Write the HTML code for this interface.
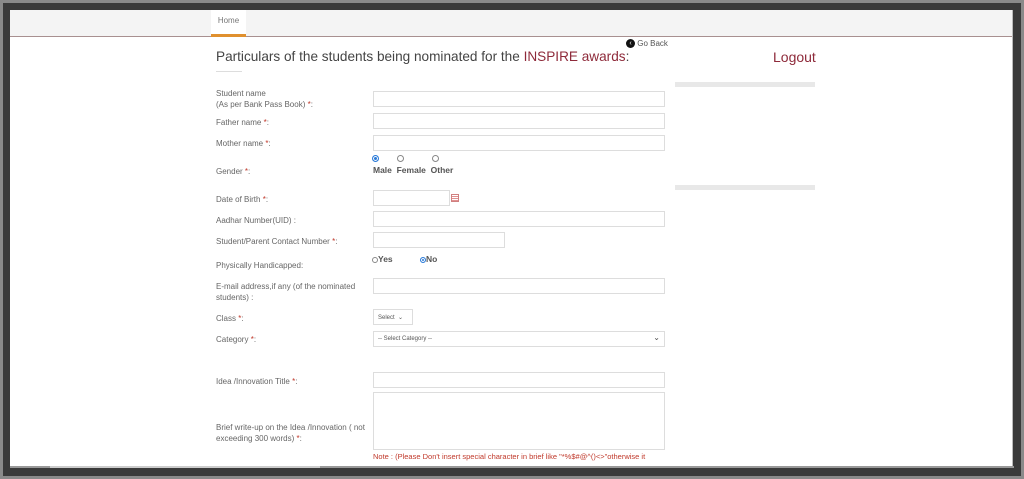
<!DOCTYPE html>
<html><head><meta charset="utf-8"><style>
*{margin:0;padding:0;box-sizing:border-box}
body{width:1024px;height:479px;background:#4a4a4a;position:relative;overflow:hidden;font-family:"Liberation Sans",sans-serif}
.frame{position:absolute;left:0;top:0;width:1024px;height:479px;border:3px solid #8a8a8a;background:#3a3a3a}
.page{position:absolute;left:10px;top:10px;width:1003px;height:457px;background:#fff;border-right:1px solid #bbb;overflow:hidden}
.nav{position:absolute;left:0;top:0;width:1003px;height:27px;background:#f4f4f4;border-bottom:1px solid #a89090}
.home{position:absolute;left:201px;top:0;width:35px;height:27px;background:#fff;border-bottom:3px solid #e0902e;font-size:8px;color:#777;text-align:center;line-height:22px}
.abs{position:absolute}
.t{font-size:13.6px;color:#444;left:206px;top:39px}
.t span{color:#8e2a3a}
.lbl{position:absolute;left:206px;font-size:8px;color:#666;line-height:11px}
.lbl b{color:#c0392b;font-weight:normal}
.in{position:absolute;border:1px solid #ddd;background:#fff;height:16px}
.bar{position:absolute;left:665px;width:140px;height:5px;background:#e8e8e8}
.rad{font-size:8.5px;font-weight:bold;color:#555}
.r{display:block;width:7px;height:7px;border:1px solid #888;border-radius:50%}
.r.on{background:#2a7ad8;border-color:#2a7ad8;box-shadow:inset 0 0 0 1px #fff}
.ri{display:inline-block;width:6px;height:6px;border:1px solid #888;border-radius:50%;vertical-align:-1px}
.ri.on{background:#2a7ad8;border-color:#2a7ad8;box-shadow:inset 0 0 0 1px #fff}
</style></head><body>
<div class="frame"></div>
<div class="page">
<div class="nav"><div class="home">Home</div></div>
<div class="abs t">Particulars of the students being nominated for the <span>INSPIRE awards</span>:</div>
<div class="abs" style="left:206px;top:61px;width:26px;height:1px;background:#ddd"></div>
<div class="abs" style="left:616px;top:29px;font-size:8px;color:#555"><span style="display:inline-block;width:9px;height:9px;border-radius:50%;background:#111;color:#fff;font-size:7px;line-height:9px;text-align:center;vertical-align:middle">‹</span> Go Back</div>
<div class="abs" style="left:763px;top:39px;font-size:14px;color:#8e2a3a">Logout</div>
<div class="bar" style="top:72px"></div>
<div class="bar" style="top:175px"></div>

<div class="lbl" style="top:78px">Student name<br>(As per Bank Pass Book) <b>*</b>:</div>
<div class="in" style="left:363px;top:81px;width:292px"></div>
<div class="lbl" style="top:107px">Father name <b>*</b>:</div>
<div class="in" style="left:363px;top:103px;width:292px"></div>
<div class="lbl" style="top:128px">Mother name <b>*</b>:</div>
<div class="in" style="left:363px;top:125px;width:292px"></div>
<div class="lbl" style="top:156px">Gender <b>*</b>:</div>
<div class="abs" style="left:362px;top:145px"><span class="r on"></span></div>
<div class="abs" style="left:387px;top:145px"><span class="r"></span></div>
<div class="abs" style="left:422px;top:145px"><span class="r"></span></div>
<div class="abs rad" style="left:363px;top:155px">Male&nbsp; Female&nbsp; Other</div>
<div class="lbl" style="top:184px">Date of Birth <b>*</b>:</div>
<div class="in" style="left:363px;top:180px;width:77px"></div>
<div class="abs" style="left:441px;top:184px;width:8px;height:8px;border:1px solid #d08080;background:repeating-linear-gradient(#fff 0 1px,#e09090 1px 2px)"></div>
<div class="lbl" style="top:205px">Aadhar Number(UID) :</div>
<div class="in" style="left:363px;top:201px;width:292px"></div>
<div class="lbl" style="top:226px">Student/Parent Contact Number <b>*</b>:</div>
<div class="in" style="left:363px;top:222px;width:132px"></div>
<div class="lbl" style="top:250px">Physically Handicapped:</div>
<div class="abs rad" style="left:362px;top:244px"><span class="ri"></span>Yes</div>
<div class="abs rad" style="left:410px;top:244px"><span class="ri on"></span>No</div>
<div class="lbl" style="top:271px">E-mail address,if any (of the nominated<br>students) :</div>
<div class="in" style="left:363px;top:268px;width:292px"></div>
<div class="lbl" style="top:303px">Class <b>*</b>:</div>
<div class="in" style="left:363px;top:299px;width:40px;font-size:6px;color:#555;padding:4px 0 0 4px">Select &nbsp;⌄</div>
<div class="lbl" style="top:324px">Category <b>*</b>:</div>
<div class="in" style="left:363px;top:321px;width:292px;font-size:6px;color:#555;padding:4px 0 0 4px">-- Select Category --<span style="position:absolute;right:4px;top:1px;font-size:8px">⌄</span></div>
<div class="lbl" style="top:366px">Idea /Innovation Title <b>*</b>:</div>
<div class="in" style="left:363px;top:362px;width:292px"></div>
<div class="lbl" style="top:412px">Brief write-up on the Idea /Innovation ( not<br>exceeding 300 words) <b>*</b>:</div>
<div class="in" style="left:363px;top:382px;width:292px;height:58px"></div>
<div class="abs" style="left:363px;top:442px;font-size:7.5px;color:#c0392b">Note : (Please Don't insert special character in brief like "*%$#@^()&lt;&gt;"otherwise it</div>
</div>
<div class="abs" style="left:10px;top:466px;width:1004px;height:2px;background:#999"></div>
<div class="abs" style="left:50px;top:466px;width:270px;height:2px;background:#ccc"></div>
</body></html>
